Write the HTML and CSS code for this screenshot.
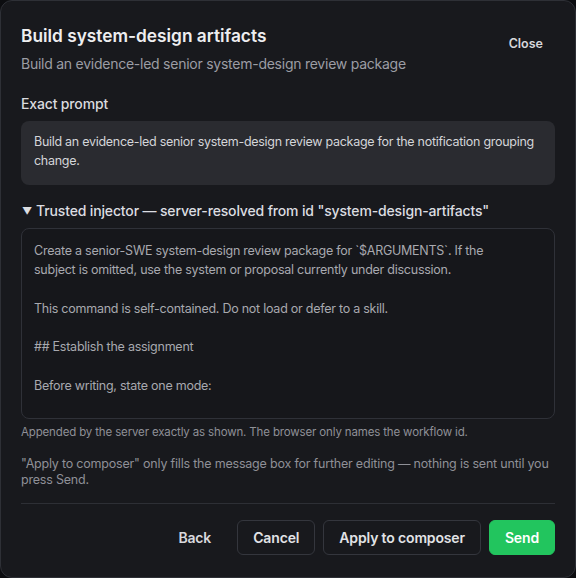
FILE: index.html
```html
<!DOCTYPE html>
<html lang="en">
    <head>
        <meta charset="UTF-8">
        <meta name="viewport" content="width=device-width, initial-scale=1.0">
        <title>Build system-design artifacts</title>
        <link rel="stylesheet" href="styles.css">
    </head>

    <body>
        <div class="dialog">
            <div class="dialog-header">
                <div>
                    <h2 class="dialog-title">Build system-design artifacts</h2>
                    <p class="dialog-subtitle">Build an evidence-led senior system-design review package</p>
                </div>
                <button class="close-btn">Close</button>
            </div>

            <div class="section-label">Exact prompt</div>
            <div class="prompt-box">Build an evidence-led senior system-design review package for the notification grouping change.</div>

            <details class="injector" open>
                <summary><span class="caret">&#9660;</span>Trusted injector — server-resolved from id "system-design-artifacts"</summary>
                <div class="injector-body">Create a senior-SWE system-design review package for `$ARGUMENTS`. If the
subject is omitted, use the system or proposal currently under discussion.

This command is self-contained. Do not load or defer to a skill.

## Establish the assignment

Before writing, state one mode:</div>
            </details>

            <p class="note note-small">Appended by the server exactly as shown. The browser only names the workflow id.</p>
            <p class="note">"Apply to composer" only fills the message box for further editing — nothing is sent until you press Send.</p>

            <div class="dialog-footer">
                <button class="btn btn-ghost">Back</button>
                <button class="btn btn-outline">Cancel</button>
                <button class="btn btn-outline">Apply to composer</button>
                <button class="btn btn-primary">Send</button>
            </div>
        </div>
    </body>
</html>
```

FILE: styles.css
```css
* {
    box-sizing: border-box;
}

body {
    margin: 0;
    background-color: #0c0d10;
    font-family: Inter, "Noto Sans", sans-serif;
}

.dialog {
    width: 576px;
    height: 578px;
    display: flex;
    flex-direction: column;
    padding: 23px 20px 22px;
    background-color: #18191d;
    border: 1px solid #2e3036;
    border-radius: 12px;
    color: #e6e7ea;
}

.dialog-header {
    display: flex;
    justify-content: space-between;
    align-items: flex-start;
}

.dialog-title {
    margin: 0;
    font-size: 17.3px;
    line-height: 24px;
    font-weight: 600;
    color: #eeeef0;
}

.dialog-subtitle {
    margin: 6px 0 0;
    font-size: 14px;
    line-height: 20px;
    letter-spacing: -0.25px;
    color: #9c9da4;
}

.close-btn {
    margin: 3px 0 0 0;
    height: 32px;
    padding: 0 12px;
    background: none;
    border: none;
    font-family: inherit;
    font-size: 12.5px;
    font-weight: 600;
    color: #d6d7db;
    cursor: pointer;
}

.section-label {
    margin-top: 20px;
    font-size: 14px;
    line-height: 20px;
    font-weight: 500;
    letter-spacing: -0.15px;
    color: #dadbdf;
}

.prompt-box {
    margin-top: 7px;
    padding: 11px 13px 15px;
    background-color: #2a2b30;
    border-radius: 8px;
    font-size: 12.5px;
    line-height: 19px;
    letter-spacing: -0.28px;
    color: #d4d5d9;
}

.injector {
    margin-top: 16px;
}

.injector summary {
    display: flex;
    align-items: center;
    list-style: none;
    font-size: 14px;
    line-height: 20px;
    font-weight: 500;
    letter-spacing: -0.15px;
    color: #dcdde1;
    cursor: pointer;
}

.injector summary::-webkit-details-marker {
    display: none;
}

.caret {
    font-size: 10px;
    margin: 0 4px 0 1px;
}

.injector-body {
    margin-top: 7px;
    height: 191px;
    overflow: hidden;
    padding: 12px 12px;
    border: 1px solid #2f3138;
    border-radius: 8px;
    background-color: #16171b;
    font-size: 12.5px;
    line-height: 19.3px;
    letter-spacing: -0.25px;
    color: #a8a9af;
    white-space: pre-wrap;
}

.note {
    margin: 0;
    font-size: 12.5px;
    line-height: 16.5px;
    letter-spacing: -0.2px;
    color: #8f9097;
}

.note-small {
    margin-top: 5px;
    margin-bottom: 15px;
    font-size: 11.5px;
    letter-spacing: -0.15px;
}

.dialog-footer {
    margin-top: 14px;
    padding-top: 16px;
    border-top: 1px solid #2d2f35;
    display: flex;
    justify-content: flex-end;
    gap: 8px;
}

.btn {
    height: 35px;
    padding: 0 15px;
    border-radius: 6px;
    font-family: inherit;
    font-size: 14px;
    font-weight: 600;
    letter-spacing: -0.15px;
    cursor: pointer;
}

.btn-ghost {
    background: none;
    border: 1px solid transparent;
    color: #d8d9dd;
    margin-right: 2px;
}

.btn-outline {
    background: none;
    border: 1px solid #34363d;
    color: #e2e3e6;
}

.btn-primary {
    background-color: #22c55e;
    border: 1px solid #22c55e;
    color: #ffffff;
}
```
